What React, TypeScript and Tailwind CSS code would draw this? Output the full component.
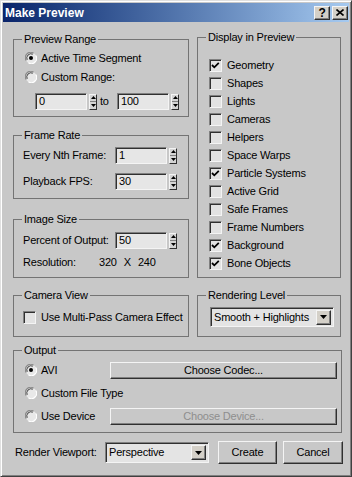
import React from 'react'

const sunken =
  'border border-t-[#808080] border-l-[#808080] border-r-[#f4f4f4] border-b-[#f4f4f4] shadow-[inset_1px_1px_0_#303030]'
const raised =
  'border border-t-[#f4f4f4] border-l-[#f4f4f4] border-r-[#303030] border-b-[#303030] shadow-[inset_-1px_-1px_0_#808080]'

function Group({
  label,
  className,
  children,
}: {
  label: string
  className: string
  children?: React.ReactNode
}) {
  return (
    <div className={`border border-[#747474] ${className}`}>
      <div className="-mt-[7px] ml-[8px] w-fit bg-[#c8c8c8] px-[2px] leading-[13px]">{label}</div>
      {children}
    </div>
  )
}

function Radio({ checked }: { checked?: boolean }) {
  return (
    <svg width="12" height="12" viewBox="0 0 12 12" className="shrink-0">
      <circle cx="6" cy="6" r="5.5" fill="#e8e8e8" />
      <path d="M1.2 8.5 A5.3 5.3 0 0 1 8.5 1.2" fill="none" stroke="#8a8a8a" strokeWidth="1.2" />
      <path d="M2.2 7.8 A4.2 4.2 0 0 1 7.8 2.2" fill="none" stroke="#404040" strokeWidth="1" />
      <path d="M10.8 3.5 A5.3 5.3 0 0 1 3.5 10.8" fill="none" stroke="#ffffff" strokeWidth="1.2" />
      {checked && <circle cx="6" cy="6" r="2" fill="#000" />}
    </svg>
  )
}

function Check({ checked }: { checked?: boolean }) {
  return (
    <div className={`w-[13px] h-[13px] shrink-0 bg-[#e2e2e2] ${sunken}`}>
      {checked && (
        <svg width="11" height="11" viewBox="0 0 11 11" className="block">
          <polyline points="2,5 4.3,7.3 8.8,2.8" fill="none" stroke="#000" strokeWidth="1.8" />
        </svg>
      )}
    </div>
  )
}

function Arrows() {
  return (
    <div className={`w-[8px] h-[16px] flex flex-col bg-[#d4d4d4] ${raised} shadow-none`}>
      <div className="flex-1 flex items-center justify-center border-b border-[#808080]">
        <svg width="5" height="3" viewBox="0 0 5 3">
          <polygon points="0,3 5,3 2.5,0" fill="#000" />
        </svg>
      </div>
      <div className="flex-1 flex items-center justify-center">
        <svg width="5" height="3" viewBox="0 0 5 3">
          <polygon points="0,0 5,0 2.5,3" fill="#000" />
        </svg>
      </div>
    </div>
  )
}

function Spin({ value }: { value: string }) {
  return (
    <div className="flex items-center gap-[2px]">
      <div className={`w-[52px] h-[17px] bg-[#e6e6e6] pl-[3px] leading-[14px] ${sunken}`}>{value}</div>
      <Arrows />
    </div>
  )
}

function DropBtn() {
  return (
    <div className={`w-[15px] h-[15px] bg-[#d4d0c8] flex items-center justify-center ${raised}`}>
      <svg width="7" height="4" viewBox="0 0 7 4">
        <polygon points="0,0 7,0 3.5,4" fill="#000" />
      </svg>
    </div>
  )
}

function Button({ label, className, disabled }: { label: string; className: string; disabled?: boolean }) {
  return (
    <div
      className={`flex items-center justify-center bg-[#c8c8c8] ${raised} ${
        disabled ? 'text-[#8e8e8e]' : ''
      } ${className}`}
    >
      {label}
    </div>
  )
}

const displayItems = [
  { label: 'Geometry', on: true },
  { label: 'Shapes', on: false },
  { label: 'Lights', on: false },
  { label: 'Cameras', on: false },
  { label: 'Helpers', on: false },
  { label: 'Space Warps', on: false },
  { label: 'Particle Systems', on: true },
  { label: 'Active Grid', on: false },
  { label: 'Safe Frames', on: false },
  { label: 'Frame Numbers', on: false },
  { label: 'Background', on: true },
  { label: 'Bone Objects', on: true },
]

export default function App() {
  return (
    <div className="w-[352px] h-[477px] overflow-hidden bg-[#c8c8c8] font-['Liberation_Sans',Arial,sans-serif] text-[11px] tracking-[-0.2px] text-black border border-t-[#e0e0e0] border-l-[#e0e0e0] border-r-[#404040] border-b-[#404040] shadow-[inset_1px_1px_0_#ffffff,inset_-1px_-1px_0_#808080] p-[2px]">
      {/* title bar */}
      <div className="h-[19px] flex items-center justify-between bg-gradient-to-r from-[#0a246a] to-[#a6caf0] pl-[2px] pr-[1px]">
        <span className="text-white font-bold text-[12px] tracking-normal">Make Preview</span>
        <div className="flex gap-[2px]">
          <div className={`w-[16px] h-[14px] bg-[#d4d0c8] flex items-center justify-center font-bold text-[12px] leading-none ${raised}`}>
            ?
          </div>
          <div className={`w-[16px] h-[14px] bg-[#d4d0c8] flex items-center justify-center ${raised}`}>
            <svg width="8" height="7" viewBox="0 0 8 7">
              <path d="M0.5 0.5 L7.5 6.5 M7.5 0.5 L0.5 6.5" stroke="#000" strokeWidth="1.6" />
            </svg>
          </div>
        </div>
      </div>

      <div className="pl-[10px]">
        <div className="flex gap-[8px] items-start">
          {/* left column */}
          <div className="w-[176px] flex flex-col mt-[17px]">
            <Group label="Preview Range" className="h-[78px]">
              <div className="pl-[11px]">
                <div className="mt-[3px] h-[18px] flex items-center gap-[4px]">
                  <Radio checked />
                  <span>Active Time Segment</span>
                </div>
                <div className="mt-[1px] h-[18px] flex items-center gap-[4px]">
                  <Radio />
                  <span>Custom Range:</span>
                </div>
                <div className="mt-[7px] ml-[10px] flex items-center">
                  <Spin value="0" />
                  <span className="ml-[3px] w-[17px]">to</span>
                  <Spin value="100" />
                </div>
              </div>
            </Group>

            <Group label="Frame Rate" className="mt-[18px] h-[64px]">
              <div className="pl-[9px]">
                <div className="mt-[5px] flex items-center">
                  <span className="w-[92px]">Every Nth Frame:</span>
                  <Spin value="1" />
                </div>
                <div className="mt-[9px] flex items-center">
                  <span className="w-[92px]">Playback FPS:</span>
                  <Spin value="30" />
                </div>
              </div>
            </Group>

            <Group label="Image Size" className="mt-[20px] h-[59px]">
              <div className="pl-[9px]">
                <div className="mt-[6px] flex items-center">
                  <span className="w-[92px]">Percent of Output:</span>
                  <Spin value="50" />
                </div>
                <div className="mt-[5px] h-[17px] flex items-center">
                  <span className="w-[76px]">Resolution:</span>
                  <span>320</span>
                  <span className="ml-[7px]">X</span>
                  <span className="ml-[7px]">240</span>
                </div>
              </div>
            </Group>

            <Group label="Camera View" className="mt-[17px] h-[42px]">
              <div className="pl-[9px] mt-[6px] h-[18px] flex items-center gap-[5px]">
                <Check />
                <span>Use Multi-Pass Camera Effect</span>
              </div>
            </Group>
          </div>

          {/* right column */}
          <div className="w-[144px] flex flex-col mt-[15px]">
            <Group label="Display in Preview" className="h-[241px]">
              <div className="pl-[11px] mt-[12px]">
                {displayItems.map((item, i) => (
                  <div key={i} className="h-[18px] flex items-center gap-[5px]">
                    <Check checked={item.on} />
                    <span>{item.label}</span>
                  </div>
                ))}
              </div>
            </Group>

            <Group label="Rendering Level" className="mt-[17px] h-[42px]">
              <div className="pl-[12px] mt-[5px]">
                <div className={`w-[124px] h-[20px] bg-[#e4e4e4] flex items-center justify-between pl-[3px] pr-[2px] ${sunken}`}>
                  <span>Smooth + Highlights</span>
                  <DropBtn />
                </div>
              </div>
            </Group>
          </div>
        </div>

        <Group label="Output" className="mt-[13px] w-[329px] h-[83px]">
          <div className="pl-[11px]">
            <div className="mt-[4px] h-[18px] flex items-center">
              <div className="w-[85px] flex items-center gap-[4px]">
                <Radio checked />
                <span>AVI</span>
              </div>
              <Button label="Choose Codec..." className="w-[227px] h-[17px]" />
            </div>
            <div className="mt-[5px] h-[18px] flex items-center gap-[4px]">
              <Radio />
              <span>Custom File Type</span>
            </div>
            <div className="mt-[5px] h-[18px] flex items-center">
              <div className="w-[85px] flex items-center gap-[4px]">
                <Radio />
                <span>Use Device</span>
              </div>
              <Button label="Choose Device..." className="w-[227px] h-[17px]" disabled />
            </div>
          </div>
        </Group>

        <div className="mt-[8px] h-[23px] flex items-center pl-[2px]">
          <span className="w-[90px]">Render Viewport:</span>
          <div className={`w-[104px] h-[21px] bg-[#e4e4e4] flex items-center justify-between pl-[3px] pr-[2px] ${sunken}`}>
            <span>Perspective</span>
            <DropBtn />
          </div>
          <Button label="Create" className="ml-[9px] w-[59px] h-[23px]" />
          <Button label="Cancel" className="ml-[6px] w-[60px] h-[23px]" />
        </div>
      </div>
    </div>
  )
}
